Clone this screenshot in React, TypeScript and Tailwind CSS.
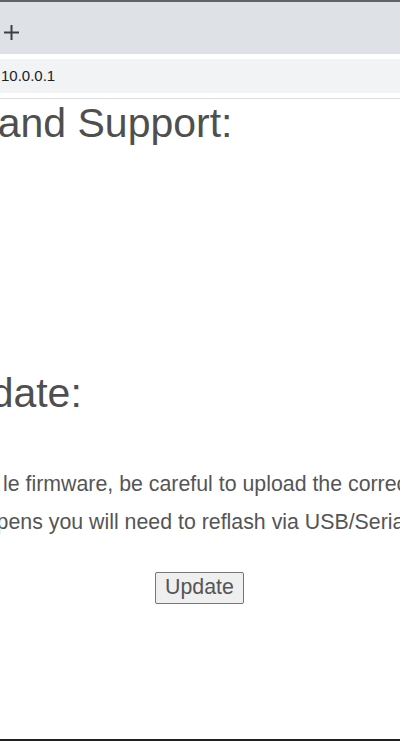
export default function App() {
  return (
    <div className="w-[400px] h-[741px] overflow-hidden flex flex-col bg-white font-['Liberation_Sans',Arial,sans-serif]">
      <div className="h-[2px] shrink-0 bg-[#5f6368]" />
      <div className="h-[52px] shrink-0 bg-[#dee1e6] flex items-center pl-[3px]">
        <svg width="17" height="17" viewBox="0 0 17 17" className="mt-[8px]">
          <path d="M8.5 1 V16 M1 8.5 H16" stroke="#3c4043" strokeWidth="2" fill="none" />
        </svg>
      </div>
      <div className="h-[5px] shrink-0 bg-white" />
      <div className="h-[34px] shrink-0 bg-[#f1f3f4] flex items-center text-[15px] text-[#202124] pl-[1px]">
        10.0.0.1
      </div>
      <div className="h-[5px] shrink-0 bg-white" />
      <div className="h-px shrink-0 bg-[#dadce0]" />
      <main className="flex-1 overflow-hidden flex flex-col items-start text-[#4f4f4f]">
        <h1 className="mt-[4px] ml-[-98px] whitespace-nowrap text-[41px] leading-none">Help and Support:</h1>
        <h2 className="mt-[229px] ml-[-244px] whitespace-nowrap text-[41px] leading-none">Firmware Update:</h2>
        <div className="mt-[51px] text-[21.33px] leading-[38px] text-[#555555] whitespace-nowrap">
          <div className="ml-[3px]">le firmware, be careful to upload the correct</div>
          <div className="ml-[-39px]">happens you will need to reflash via USB/Serial</div>
        </div>
        <div className="mt-[31px] ml-[155px]">
          <button className="w-[89px] h-[32px] bg-[#efefef] border border-[#767676] rounded-[2px] text-[21.33px] leading-none text-[#555555] flex items-center justify-center">
            Update
          </button>
        </div>
      </main>
      <div className="h-[2px] shrink-0 bg-[#202124]" />
    </div>
  );
}
